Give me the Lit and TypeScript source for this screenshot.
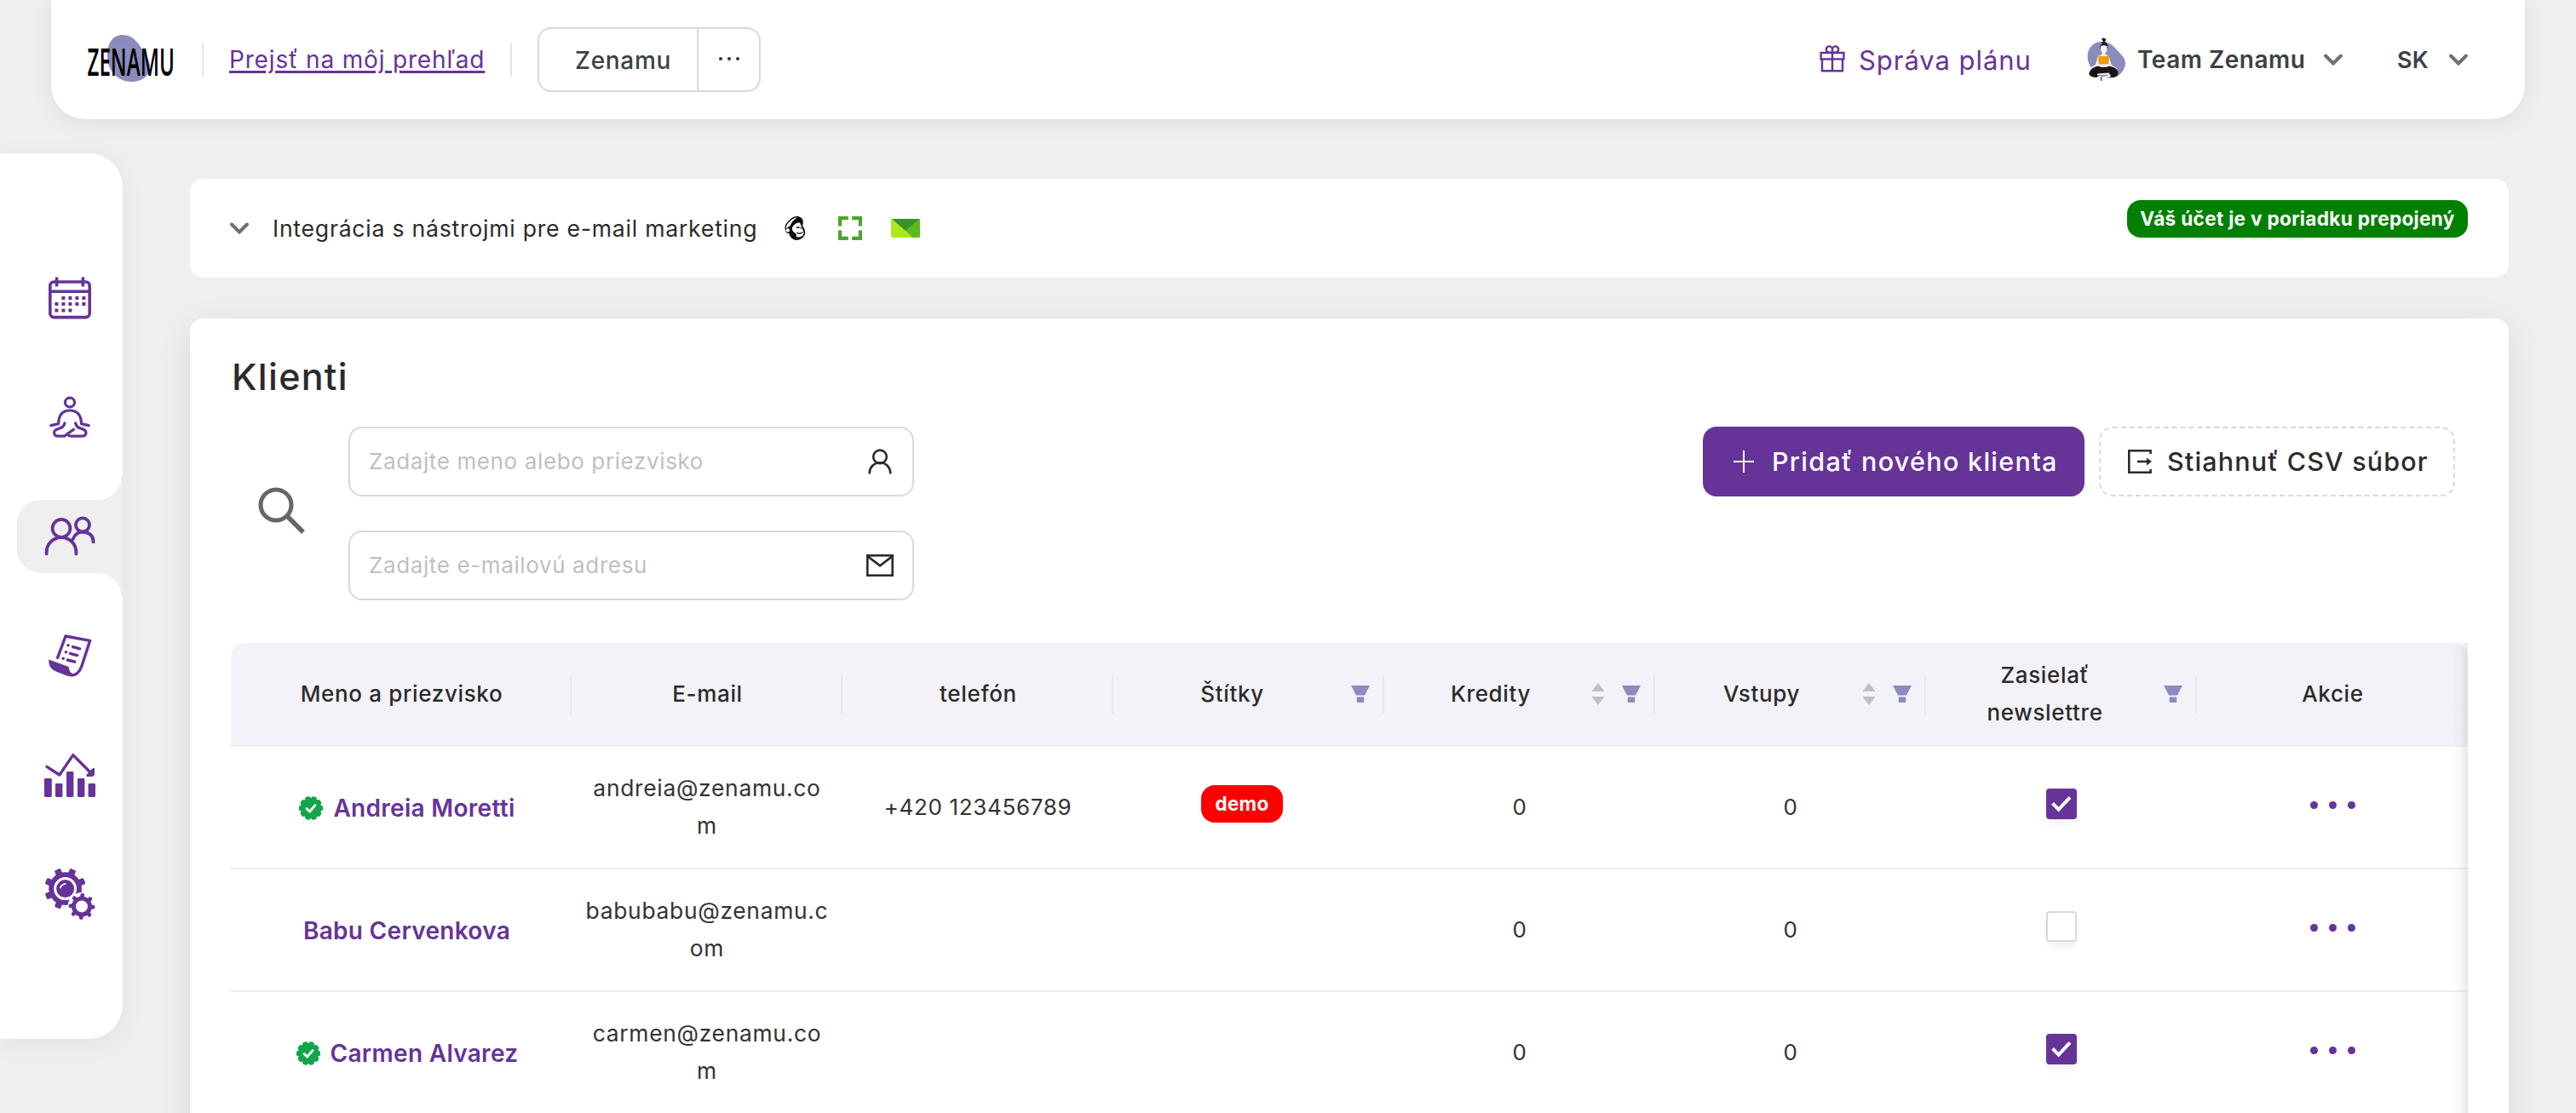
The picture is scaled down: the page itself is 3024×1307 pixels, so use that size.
import { LitElement, html, css, svg, nothing } from "lit";
import { customElement } from "lit/decorators.js";
import { classMap } from "lit/directives/class-map.js";

interface Client {
  name: string;
  email: string;
  phone: string;
  tag: string;
  verified: boolean;
  newsletter: boolean;
}

interface Column {
  label: string;
  sort?: boolean;
  filter?: boolean;
}

const CLIENTS: Client[] = [
  { name: "Andreia Moretti", email: "andreia@zenamu.com", phone: "+420 123456789", tag: "demo", verified: true, newsletter: true },
  { name: "Babu Cervenkova", email: "babubabu@zenamu.com", phone: "", tag: "", verified: false, newsletter: false },
  { name: "Carmen Alvarez", email: "carmen@zenamu.com", phone: "", tag: "", verified: true, newsletter: true },
];

const COLUMNS: Column[] = [
  { label: "Meno a priezvisko" },
  { label: "E-mail" },
  { label: "telefón" },
  { label: "Štítky", filter: true },
  { label: "Kredity", sort: true, filter: true },
  { label: "Vstupy", sort: true, filter: true },
  { label: "Zasielať newslettre", filter: true },
  { label: "Akcie" },
];

const chevron = html`<svg class="chevron" width="24" height="16" viewBox="0 0 24 16">
  <path d="M3 3.5 L12 12.5 L21 3.5" fill="none" stroke="#6b7178" stroke-width="4" stroke-linecap="round" />
</svg>`;

/* Evenly spaced rounded teeth around a gear body. */
const teeth = (cx: number, cy: number, r: number, w: number, h: number, count: number, offset: number) =>
  Array.from(
    { length: count },
    (_, i) => svg`<rect x=${cx - w / 2} y=${cy - r} width=${w} height=${h} rx="1.6"
      transform="rotate(${offset + (i * 360) / count} ${cx} ${cy})" />`
  );

const calendarDots = [
  [17, 25], [25, 25], [33, 25], [41, 25],
  [9, 32], [17, 32], [25, 32], [33, 32], [41, 32],
  [9, 39.5], [17, 39.5], [25, 39.5],
];

const ICONS = {
  calendar: html`<svg width="50" height="50" viewBox="0 0 50 50">
    <g fill="none" stroke="#639" stroke-width="3.6">
      <rect x="1.8" y="6" width="46.4" height="41.6" rx="4.5" />
      <path d="M2 17.2 H48 M9.6 0.4 V11.6 M40.4 0.4 V11.6" />
    </g>
    <g fill="#639">${calendarDots.map(([x, y]) => svg`<rect x=${x - 1.6} y=${y - 2} width="4" height="4" />`)}</g>
  </svg>`,
  yoga: html`<svg width="50" height="50" viewBox="0 0 50 50" fill="none" stroke="#639" stroke-width="3.2" stroke-linecap="round" stroke-linejoin="round">
    <ellipse cx="25" cy="7.6" rx="5.6" ry="5.4" />
    <path d="M2.8 34.6 L11.6 32.6 Q12 17 25 17 Q38 17 38.6 32.6 L47.2 34.6" />
    <path d="M19 32 Q17.6 36.6 14.6 37.4 Q6.6 39.6 6.6 42.8 Q6.6 47.2 11.6 47.2 H18.4 L29.4 39.4" />
    <path d="M31.6 32 Q33 36.6 35.8 37.4 Q44 39.6 44 42.8 Q44 47.2 39 47.2 H26.4 Q22.6 46.6 22 44.6" />
  </svg>`,
  users: html`<svg width="60" height="48" viewBox="0 0 60 48" fill="none" stroke="#639" stroke-width="3.8" stroke-linecap="round">
    <circle cx="20" cy="14.4" r="10.4" />
    <path d="M2.6 44.4 V42.6 A17.4 17.6 0 0 1 37.4 42.6 V44.4" />
    <circle cx="45" cy="10.4" r="8" />
    <path d="M33.4 27.4 Q37 18.6 45 18.6 Q57.6 19.4 57.6 30.4" />
  </svg>`,
  notes: html`<svg width="52" height="52" viewBox="0 0 52 52">
    <g fill="none" stroke="#639" stroke-width="3.4" stroke-linecap="round" stroke-linejoin="round">
      <path d="M11.6 28.4 L21 3 L49.6 8.4 L40 38 Q36 49 28 49" />
      <path d="M29.6 15.6 L37.6 17.8 M26.4 23.4 L34.6 25.6 M23.4 31 L31.6 33.2" />
      <path d="M23.9 13.8 h.2 M21.3 21.8 h.2 M18.1 29.2 h.2" />
    </g>
    <path d="M1.2 30.6 L24.6 39 Q25 46 30.6 47.6 Q29 51.6 22.4 49.6 L8.6 44 Q.8 40.6 1.2 30.6Z" fill="#639" />
  </svg>`,
  chart: html`<svg width="60" height="52" viewBox="0 0 60 52">
    <g fill="#639">
      <rect x="0" y="30" width="8.8" height="22" rx="1.4" />
      <rect x="13" y="36" width="8.4" height="16" rx="1.4" />
      <rect x="26" y="22" width="8.4" height="30" rx="1.4" />
      <rect x="39" y="30" width="8.4" height="22" rx="1.4" />
      <rect x="51.6" y="36" width="8.4" height="16" rx="1.4" />
      <path d="M59 18 V24 Q59 28 55 28 H50 Q48.4 26.4 50 25.2 L56.4 18.6Z" />
    </g>
    <path d="M3 16.4 L17.8 26 L33.8 2.6 L56 25" fill="none" stroke="#639" stroke-width="3.4" stroke-linecap="round" stroke-linejoin="round" />
  </svg>`,
  gears: html`<svg width="60" height="62" viewBox="0 0 60 62">
    <g fill="#639">
      <circle cx="24.6" cy="24.6" r="19.4" />
      ${teeth(24.6, 24.6, 24.4, 7.6, 10, 8, 22.5)}
    </g>
    <circle cx="24.6" cy="24.6" r="12" fill="none" stroke="#fff" stroke-width="3" />
    <path d="M19 23.4 Q20 19.6 24.6 18.8" fill="none" stroke="#fff" stroke-width="1.8" stroke-linecap="round" />
    <circle cx="44" cy="45.4" r="16.4" fill="#fff" />
    <g fill="#639">
      <circle cx="44" cy="45.4" r="12" />
      ${teeth(44, 45.4, 15.4, 4.6, 6, 8, 3)}
    </g>
    <circle cx="44" cy="45.4" r="7" fill="#fff" />
  </svg>`,
};

@customElement("app-header")
class AppHeader extends LitElement {
  static styles = css`
    :host {
      display: flex;
      align-items: center;
      height: 140px;
      margin: 0 60px;
      box-sizing: border-box;
      padding: 0 66px 0 42px;
      background: #fff;
      border-radius: 0 0 40px 40px;
      box-shadow: 0 4px 24px rgba(0, 0, 0, 0.08);
      color: #3c4144;
    }
    .logo { flex: none; margin-top: -2px; overflow: visible; }
    .rule { flex: none; width: 2px; height: 40px; background: #e6e6e6; }
    .r1 { margin: 0 30px 0 32px; }
    .r2 { margin: 0 30px; }
    .link {
      width: 300px;
      white-space: nowrap;
      color: #639;
      font-size: 28px;
      letter-spacing: 0.83px;
      text-decoration: underline;
      text-decoration-thickness: 3px;
      text-underline-offset: 3px;
      text-decoration-skip-ink: auto;
    }
    .group {
      display: flex;
      box-sizing: border-box;
      width: 262px;
      height: 76px;
      border: 2px solid #d9d9d9;
      border-radius: 16px;
    }
    .studio {
      width: 187px;
      border-right: 2px solid #d9d9d9;
      font-size: 28px;
      font-weight: 500;
      line-height: 74px;
      padding-left: 42px;
      box-sizing: border-box;
      letter-spacing: 0.7px;
    }
    .more { flex: 1; display: flex; gap: 6px; align-items: center; justify-content: center; padding-bottom: 2px; }
    .more i { width: 4px; height: 4px; border-radius: 50%; background: #333; }
    .right { margin-left: auto; display: flex; align-items: center; }
    .plan {
      display: flex;
      align-items: center;
      width: 314px;
      color: #639;
      font-size: 31px;
      letter-spacing: 0.95px;
      white-space: nowrap;
    }
    .plan svg { margin-top: -2px; }
    .plan span { margin-left: 16px; }
    .team { margin-left: 11px; width: 218px; font-size: 28px; font-weight: 600; letter-spacing: 0.5px; white-space: nowrap; }
    .lang { margin-left: 63px; width: 60px; font-size: 27px; font-weight: 600; letter-spacing: 0.3px; }
  `;

  render() {
    return html`
      <svg class="logo" width="103" height="60" viewBox="0 0 103 60">
        <path d="M42 2 C56 2 62 14 70 27 C80 43 70 57 53 57 C36 57 24 44 24 27 C24 12 30 2 42 2Z" fill="#8b8bbd" />
        <text transform="translate(0.5 50) scale(0.525 1)" font-family="'Open Sans', sans-serif" font-size="46" font-weight="600" fill="#000">ZENAMU</text>
      </svg>
      <div class="rule r1"></div>
      <a class="link">Prejsť na môj prehľad</a>
      <div class="rule r2"></div>
      <div class="group">
        <div class="studio">Zenamu</div>
        <div class="more"><i></i><i></i><i></i></div>
      </div>
      <div class="right">
        <div class="plan">
          <svg width="30" height="32" viewBox="0 0 30 32" fill="none" stroke="#639" stroke-width="2.4">
            <rect x="1.6" y="9" width="26.8" height="7.4" />
            <path d="M3 16.4 V30.2 H27 V16.4 M15 9 V30.2" />
            <path d="M15 8.6 H11.2 A3.6 3.6 0 1 1 15 5 Z M15 8.6 H18.8 A3.6 3.6 0 1 0 15 5 Z" />
          </svg>
          <span>Správa plánu</span>
        </div>
        <svg width="48" height="52" viewBox="0 0 48 52">
          <path d="M16 5 C27 4 33 12 41 21 C48 29 45 37 38 44 Q30 50 18 46 Q4 40 1 27 C-1 15 5 6 16 5Z" fill="#8b8bbd" />
          <path d="M17 8 Q17.6 5 19 4.4 Q16.4 2 18 0.6 L22 1.4 Q23 3.4 20.6 4.4 Q25 7 24.4 13 H15.2 Q14.6 10 17 8Z" fill="#1a1a1a" />
          <path d="M16 10.6 Q20 8 23.6 10.6 L23.2 16 L21.4 18 V20 L25.4 21 L28.4 32 L36 37 L33 38.4 L26 34 L25 36 H15 L12 34 L5 38 L1.6 37 L10 32 L13.2 21 L17.6 20 V18 L16 15Z" fill="#f6f4f4" />
          <path d="M13.6 20.6 L16.4 22 H22.6 L25.4 20.6 Q26.6 25 25 31.4 H14 Q12.4 26 13.6 20.6Z" fill="#ee9a0b" />
          <path d="M13 33.6 Q19.6 36.6 26 33.6 Q36.6 35.6 36.6 42 Q36 47 28 47 L24 43 L15 44.4 L11 47 Q2 46.6 2.4 42 Q4 35.6 13 33.6Z" fill="#161616" />
          <path d="M12 43.6 L25 42.6 L26.6 45 L17.4 47.4 L17.6 51" fill="none" stroke="#f2f2f2" stroke-width="2" />
          <path d="M16.4 46 L16.8 51" stroke="#161616" stroke-width="1" />
        </svg>
        <div class="team">Team Zenamu</div>
        ${chevron}
        <div class="lang">SK</div>
        ${chevron}
      </div>
    `;
  }
}

@customElement("app-sidebar")
class AppSidebar extends LitElement {
  static styles = css`
    :host {
      display: flex;
      flex-direction: column;
      gap: 54px;
      flex: none;
      box-sizing: border-box;
      width: 144px;
      height: 1040px;
      margin-top: 40px;
      padding: 127px 0 0 20px;
      background: #fff;
      border-radius: 0 40px 40px 0;
      box-shadow: 0 6px 30px rgba(0, 0, 0, 0.06);
    }
    .item {
      position: relative;
      display: flex;
      align-items: center;
      justify-content: center;
      height: 86px;
      border-radius: 28px 0 0 28px;
    }
    .active { background: #efefef; }
    .active::before,
    .active::after {
      content: "";
      position: absolute;
      right: 0;
      width: 30px;
      height: 28px;
    }
    .active::before { bottom: 100%; background: radial-gradient(circle at 0 0, #fff 28px, #efefef 28.8px); }
    .active::after { top: 100%; background: radial-gradient(circle at 0 100%, #fff 28px, #efefef 28.8px); }
  `;

  render() {
    return (Object.keys(ICONS) as (keyof typeof ICONS)[]).map(
      (key) => html`<div class=${classMap({ item: true, active: key === "users" })}>${ICONS[key]}</div>`
    );
  }
}

@customElement("integration-card")
class IntegrationCard extends LitElement {
  static styles = css`
    :host {
      display: flex;
      align-items: center;
      box-sizing: border-box;
      height: 116px;
      padding: 0 48px 0 46px;
      background: #fff;
      border-radius: 16px;
      color: #2b2b2b;
    }
    .title { width: 569px; margin-left: 27px; font-size: 26.6px; white-space: nowrap; letter-spacing: 0.76px; padding-bottom: 1px; }
    .chimp { margin-left: 30px; }
    .frame { margin-left: 37px; }
    .mail { margin-left: 34px; }
    .badge {
      align-self: flex-start;
      margin: 25px 0 0 auto;
      width: 400px;
      height: 44px;
      line-height: 43px;
      text-align: center;
      border-radius: 16px;
      background: #008000;
      color: #fff;
      font-size: 22.6px;
      letter-spacing: 0.3px;
      font-weight: 700;
      white-space: nowrap;
    }
  `;

  render() {
    return html`
      ${chevron}
      <div class="title">Integrácia s nástrojmi pre e-mail marketing</div>
      <svg class="chimp" width="28" height="30" viewBox="0 0 28 30">
        <path d="M3 17 Q1 12 6 7 Q12 0 18 1 L22 3 Q25 6 23 12 Q27 17 26 22 Q23 29 16 29 Q9 28 7 21 Q3 21 3 17Z" fill="#0b0b0b" />
        <path d="M4.4 15.6 Q2.6 12 8 7 Q12 2.6 17 2.2 Q11 6 8.6 12 Q6 13.4 4.4 15.6Z" fill="#fff" />
        <path d="M11 14 Q15 8 20 8.6 Q21.6 12 22.6 15.6 Q25.6 20 23.6 23.4 Q20 26.4 15.6 25 Q17 22 14 20.4 Q10 18 11 14Z" fill="#fff" />
        <circle cx="5.8" cy="17.4" r="2.2" fill="#fff" />
        <path d="M16 14.6 Q18 13 19.6 14.6 M16.4 20 Q20 23 23.4 19.4 M21 14 V15.4" fill="none" stroke="#0b0b0b" stroke-width="1.3" />
      </svg>
      <svg class="frame" width="28" height="28" viewBox="0 0 28 28" fill="none" stroke="#4ca52c" stroke-width="4.2">
        <path d="M2.1 11.6 V2.1 H11.8 M16.2 2.1 H25.9 V11.6 M25.9 16.4 V25.9 H16.2 M11.8 25.9 H2.1 V16.4" />
      </svg>
      <svg class="mail" width="34" height="22" viewBox="0 0 34 22">
        <rect width="34" height="22" rx="2" fill="#aae91b" />
        <path d="M33 0 Q34 0 34 2 V20 Q34 22 32 22 H25 L17 13.6Z" fill="#5bbb1c" />
        <path d="M1 0 H33.6 L17 14Z" fill="#3a912c" />
      </svg>
      <div class="badge">Váš účet je v poriadku prepojený</div>
    `;
  }
}

@customElement("client-table")
class ClientTable extends LitElement {
  static styles = css`
    :host { display: block; position: relative; color: #2b2b2b; }
    :host::after {
      content: "";
      position: absolute;
      top: 0;
      right: 0;
      bottom: 0;
      width: 20px;
      background: linear-gradient(to left, rgba(0, 0, 0, 0.085), rgba(0, 0, 0, 0.025) 50%, transparent);
    }
    .row {
      display: grid;
      grid-template-columns: 400px repeat(7, 318px);
      height: 144px;
      box-sizing: border-box;
      border-bottom: 2px solid #efefef;
      font-size: 26px;
      letter-spacing: 0.65px;
    }
    .head {
      height: 122px;
      background: #f3f2f8;
      border-radius: 16px 16px 0 0;
      font-weight: 500;
      font-size: 26px;
      line-height: 44px;
    }
    .th { display: flex; align-items: center; text-align: center; padding-left: 16px; }
    .th .label { flex: 1; padding-right: 13px; box-sizing: border-box; }
    .th.filtered { padding-left: 0; }
    .th.filtered .label { padding: 0 32px; }
    .th.sorted .label { padding: 0 28px 0 35px; }
    .th::after { content: ""; width: 2px; height: 45px; background: #e8e7ee; }
    .th:last-child::after { visibility: hidden; }
    .sorter { margin-right: 20px; }
    .funnel { margin-right: 15px; }
    .td {
      display: flex;
      align-items: center;
      justify-content: center;
      text-align: center;
      line-height: 44px;
      color: #333;
    }
    .name { gap: 12px; color: #639; font-weight: 600; font-size: 28px; letter-spacing: 0.3px; padding-top: 2px; margin-left: 13px; }
    .name.verified { margin-left: 14px; }
    .email { padding: 0 16px 2px; word-break: break-all; font-size: 26.4px; letter-spacing: 0.7px; }
    .mail-text { width: 286px; }
    .tag {
      box-sizing: border-box;
      width: 96px;
      height: 44px;
      line-height: 43px;
      margin: -8px 16px 0 0;
      border-radius: 16px;
      background: #f00;
      color: #fff;
      font-size: 22.5px;
      letter-spacing: 0.3px;
      font-weight: 700;
    }
    .box {
      box-sizing: border-box;
      display: flex;
      align-items: center;
      justify-content: center;
      width: 36px;
      height: 36px;
      margin-top: -8px;
      border: 2px solid #d9d9d9;
      border-radius: 4px;
      background: #fff;
      box-shadow: 0 6px 8px rgba(0, 0, 0, 0.05);
    }
    .box.checked { background: #639; border-color: #639; }
    .actions { gap: 13px; padding-bottom: 5px; }
    .actions i { width: 9px; height: 9px; border-radius: 50%; background: #639; }
  `;

  private header(c: Column) {
    return html`<div class=${classMap({ th: true, filtered: !!c.filter, sorted: !!c.sort })}>
      <div class="label">${c.label}</div>
      ${c.sort
        ? html`<svg class="sorter" width="16" height="26" viewBox="0 0 16 26" fill="#bfbfbf">
            <path d="M8 0 L15.6 10 H.4Z M8 26 L.4 16 H15.6Z" />
          </svg>`
        : nothing}
      ${c.filter
        ? html`<svg class="funnel" width="22" height="20" viewBox="0 0 22 20" fill="#8b8bbd">
            <path d="M0 0 H22 L16 11.4 H6Z M6.8 13.6 H15.2 V20 H6.8Z" />
          </svg>`
        : nothing}
    </div>`;
  }

  private row(c: Client) {
    return html`<div class="row">
      <div class=${classMap({ td: true, name: true, verified: c.verified })}>
        ${c.verified
          ? html`<svg width="28" height="28" viewBox="0 0 28 28">
              <g fill="#12a54a">
                <circle cx="14" cy="14" r="12.2" />
                ${teeth(14, 14, 14, 6, 6, 10, 18)}
              </g>
              <path d="M9 14.4 L12.6 18 L19 10.6" fill="none" stroke="#fff" stroke-width="2.8" stroke-linecap="round" />
            </svg>`
          : nothing}
        <span>${c.name}</span>
      </div>
      <div class="td email"><span class="mail-text">${c.email}</span></div>
      <div class="td">${c.phone}</div>
      <div class="td">${c.tag ? html`<span class="tag">${c.tag}</span>` : nothing}</div>
      <div class="td">0</div>
      <div class="td">0</div>
      <div class="td">
        <span class=${classMap({ box: true, checked: c.newsletter })}>
          ${c.newsletter
            ? html`<svg width="26" height="20" viewBox="0 0 26 20">
                <path d="M2.6 9.4 L9.6 16.6 L23 2.4" fill="none" stroke="#fff" stroke-width="4" />
              </svg>`
            : nothing}
        </span>
      </div>
      <div class="td actions"><i></i><i></i><i></i></div>
    </div>`;
  }

  render() {
    return html`
      <div class="row head">${COLUMNS.map((c) => this.header(c))}</div>
      ${CLIENTS.map((c) => this.row(c))}
    `;
  }
}

@customElement("clients-card")
class ClientsCard extends LitElement {
  static styles = css`
    :host {
      display: block;
      box-sizing: border-box;
      height: 1100px;
      padding: 0 48px;
      background: #fff;
      border-radius: 16px;
      box-shadow: 0 10px 40px rgba(0, 0, 0, 0.09);
      color: #2b2b2b;
    }
    h1 { margin: 0; padding: 43px 0 0 1px; font-size: 43px; line-height: 50px; font-weight: 500; letter-spacing: 1.3px; }
    .toolbar { display: flex; align-items: flex-start; margin-top: 34px; height: 254px; }
    .search { margin: 71px 50px 0 32px; flex: none; }
    .fields { display: flex; flex-direction: column; gap: 40px; }
    .field {
      display: flex;
      align-items: center;
      justify-content: space-between;
      box-sizing: border-box;
      width: 664px;
      height: 82px;
      padding: 0 22px;
      border: 2px solid #d9d9d9;
      border-radius: 16px;
      color: #bfbfbf;
      font-size: 26px;
      letter-spacing: 0.62px;
      white-space: nowrap;
    }
    .field span { padding-bottom: 1px; }
    .user { margin-right: 2px; }
    .buttons { display: flex; gap: 17px; margin: 0 15px 0 auto; }
    .btn {
      display: flex;
      align-items: center;
      box-sizing: border-box;
      height: 82px;
      border-radius: 16px;
      font-size: 30.5px;
      font-weight: 500;
      white-space: nowrap;
    }
    .btn span { padding-bottom: 1px; }
    .add { width: 448px; padding-left: 36px; gap: 21px; background: #639; color: #fff; letter-spacing: 1.3px; }
    .csv { width: 418px; padding-left: 32px; gap: 18px; border: 2px dashed #d9d9d9; letter-spacing: 1.15px; }
  `;

  render() {
    return html`
      <h1>Klienti</h1>
      <div class="toolbar">
        <svg class="search" width="56" height="56" viewBox="0 0 56 56" fill="none" stroke="#666">
          <circle cx="21" cy="21" r="18" stroke-width="5" />
          <path d="M34 34 L53 53" stroke-width="5.4" />
        </svg>
        <div class="fields">
          <div class="field">
            <span>Zadajte meno alebo priezvisko</span>
            <svg class="user" width="28" height="30" viewBox="0 0 28 30" fill="none" stroke="#2b2b2b" stroke-width="2.6" stroke-linecap="round">
              <circle cx="14" cy="9.4" r="7.8" />
              <path d="M1.8 28.4 A12.2 12.2 0 0 1 26.2 28.4" />
            </svg>
          </div>
          <div class="field">
            <span>Zadajte e-mailovú adresu</span>
            <svg width="32" height="26" viewBox="0 0 32 26" fill="none" stroke="#2b2b2b" stroke-width="2.6">
              <rect x="1.3" y="1.3" width="29.4" height="23.4" />
              <path d="M2 2.6 L16 13.4 L30 2.6" />
            </svg>
          </div>
        </div>
        <div class="buttons">
          <div class="btn add">
            <svg width="24" height="26" viewBox="0 0 24 26" stroke="#fff" stroke-width="2">
              <path d="M12 0 V26 M0 13 H24" />
            </svg>
            <span>Pridať nového klienta</span>
          </div>
          <div class="btn csv">
            <svg width="28" height="28" viewBox="0 0 28 28" fill="none" stroke="#2b2b2b" stroke-width="2.6">
              <path d="M26.6 5 V1.3 H1.3 V26.7 H26.6 V23 M11 14 H24" />
              <path d="M22 9.4 L28 14 L22 18.6Z" fill="#2b2b2b" stroke="none" />
            </svg>
            <span>Stiahnuť CSV súbor</span>
          </div>
        </div>
      </div>
      <client-table></client-table>
    `;
  }
}

@customElement("app-root")
class AppRoot extends LitElement {
  static styles = css`
    :host {
      display: block;
      height: 1307px;
      overflow: hidden;
      background: #efefef;
      font-family: Inter, "Open Sans", sans-serif;
    }
    .body { display: flex; align-items: flex-start; }
    .main { display: flex; flex-direction: column; gap: 48px; width: 2722px; margin: 70px 0 0 79px; }
  `;

  render() {
    return html`
      <app-header></app-header>
      <div class="body">
        <app-sidebar></app-sidebar>
        <div class="main">
          <integration-card></integration-card>
          <clients-card></clients-card>
        </div>
      </div>
    `;
  }
}
